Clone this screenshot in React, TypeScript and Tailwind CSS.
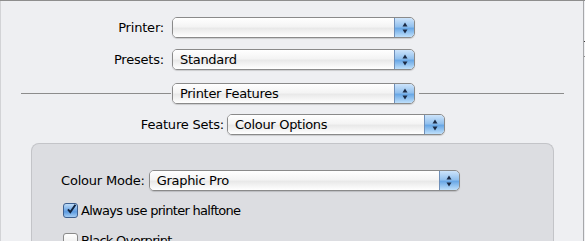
import type { ReactNode } from 'react';

const font = { fontFamily: '"DejaVu Sans", "Liberation Sans", sans-serif' };

const Arrows = () => (
  <svg width="8" height="14" viewBox="0 0 8 14">
    <path d="M4 1.5 L6.5 5.5 L1.5 5.5 Z" fill="#1b2a44" />
    <path d="M4 12.5 L6.5 8.5 L1.5 8.5 Z" fill="#1b2a44" />
  </svg>
);

const Popup = ({ width, children }: { width: string; children?: ReactNode }) => (
  <div
    className={`${width} flex h-[21px] overflow-hidden rounded-[5px] border border-[#8a8a8a] shadow-[0_1px_1px_rgba(0,0,0,0.15)]`}
  >
    <div className="flex flex-1 items-center bg-[linear-gradient(#ffffff_0%,#f4f4f4_45%,#e9e9e9_55%,#ffffff_100%)] pl-[7px] text-[13px] leading-none tracking-[-0.3px] text-black">
      {children}
    </div>
    <div className="flex w-[20px] items-center justify-center rounded-r-[4px] border-l border-[#6f8fb8] bg-[linear-gradient(#cde4fb_0%,#93c1ee_45%,#6aa8e6_55%,#bfe0fb_100%)]">
      <Arrows />
    </div>
  </div>
);

export default function App() {
  return (
    <div
      className="flex h-[241px] w-[585px] overflow-hidden border-t border-[#8e8e8e] bg-[#eeeff2] text-[13px] tracking-[-0.2px] text-black"
      style={font}
    >
      <div className="flex flex-1 flex-col border-l border-[#d2d3d6]">
        <div className="mt-[16px] flex items-center">
          <span className="w-[164px] pr-[1px] text-right">Printer:</span>
          <div className="ml-[7px]">
            <Popup width="w-[243px]" />
          </div>
        </div>
        <div className="mt-[11px] flex items-center">
          <span className="w-[164px] pr-[1px] text-right">Presets:</span>
          <div className="ml-[7px]">
            <Popup width="w-[243px]">Standard</Popup>
          </div>
        </div>
        <div className="mt-[13px] flex items-center">
          <div className="ml-[20px] h-px w-[150px] bg-[#8c8c8c]" />
          <div className="ml-[1px]">
            <Popup width="w-[243px]">Printer Features</Popup>
          </div>
          <div className="ml-[4px] h-px w-[145px] bg-[#8c8c8c]" />
        </div>
        <div className="mt-[10px] flex items-center">
          <span className="w-[223px] text-right">Feature Sets:</span>
          <div className="ml-[3px]">
            <Popup width="w-[218px]">Colour Options</Popup>
          </div>
        </div>
        <div className="ml-[30px] mt-[8px] w-[523px] flex-1 rounded-t-[8px] border border-b-0 border-[#c3c4c8] bg-[#dcdde1] pt-[26px]">
          <div className="flex items-center">
            <span className="ml-[29px]">Colour Mode:</span>
            <div className="ml-[4px]">
              <Popup width="w-[311px]">Graphic Pro</Popup>
            </div>
          </div>
          <div className="ml-[31px] mt-[10px] flex items-center">
            <div className="flex h-[15px] w-[15px] items-center justify-center rounded-[3px] border border-[#3d5f8f] bg-[linear-gradient(#bfdcf8,#5d9be0_60%,#a4ccf3)]">
              <svg width="14" height="14" viewBox="0 0 14 14" className="-mt-[3px] ml-[2px]">
                <path d="M2.5 7.5 L5.5 11 L12 1.5" stroke="#10223d" strokeWidth="2.4" fill="none" />
              </svg>
            </div>
            <span className="ml-[3px] tracking-[-0.7px]">Always use printer halftone</span>
          </div>
          <div className="ml-[31px] mt-[10px] flex items-center">
            <div className="h-[15px] w-[15px] rounded-[3px] border border-[#8a8a8a] bg-[linear-gradient(#ffffff,#e6e6e6)]" />
            <span className="ml-[3px] tracking-[-0.7px]">Black Overprint</span>
          </div>
        </div>
      </div>
      <div className="flex w-[2px] flex-col border-l border-[#a6a7aa]">
        <div className="mt-[40px] h-px w-[2px] bg-[#3b3b3b]" />
        <div className="mt-[14px] h-px w-[2px] bg-[#8a8a8a]" />
      </div>
    </div>
  );
}
